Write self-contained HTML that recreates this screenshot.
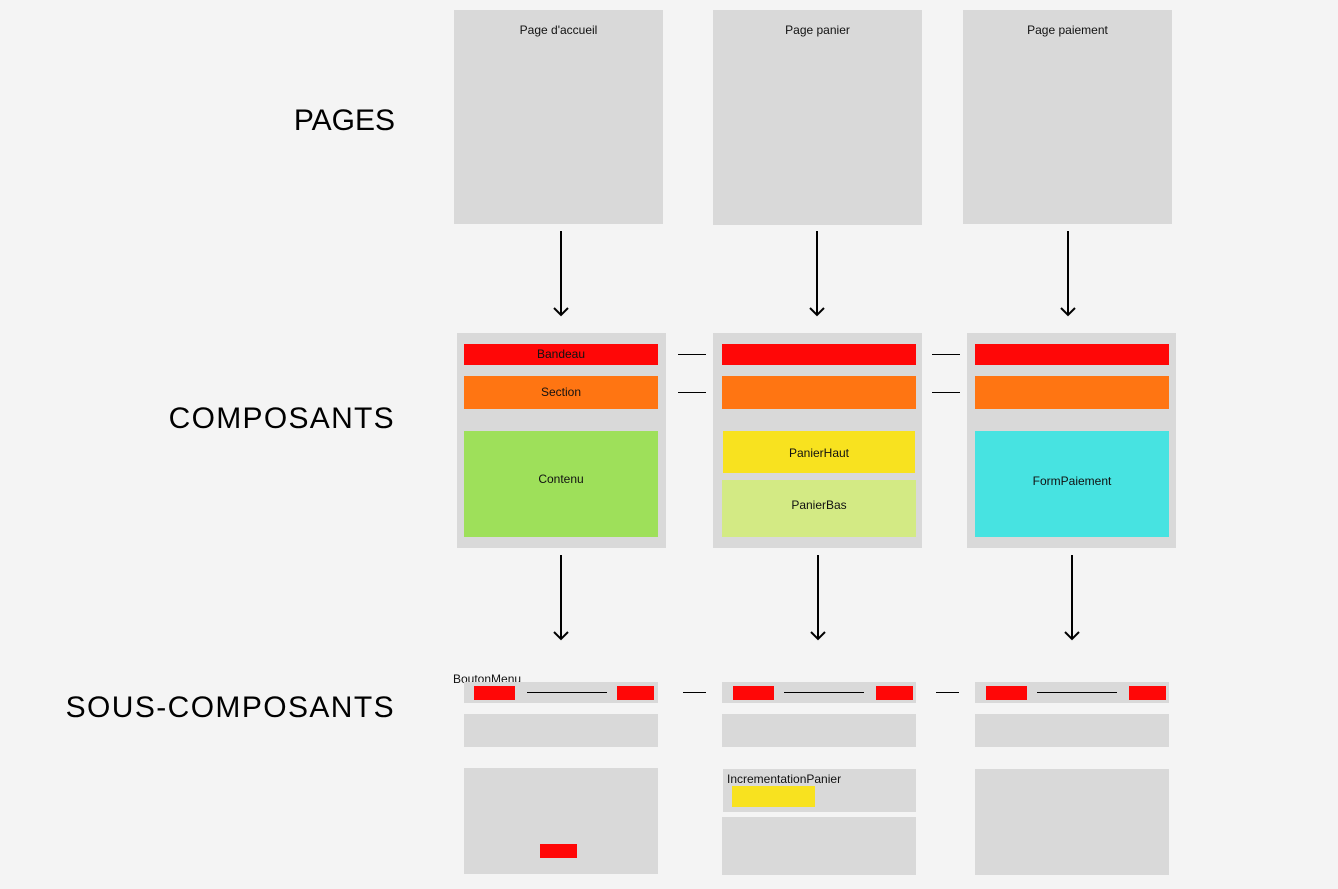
<!DOCTYPE html>
<html><head><meta charset="utf-8"><style>
body{margin:0;width:1338px;height:889px;background:#f4f4f4;position:relative;overflow:hidden;font-family:"Liberation Sans",sans-serif;}
div{position:absolute;box-sizing:border-box}
.g{background:#d9d9d9}
.r{background:#ff0707}
.o{background:#ff7512}
.t{font-size:12px;color:#111;text-align:center}
.big{font-size:30px;color:#000;right:943px;text-align:right;white-space:nowrap}
.l{height:1px;background:#000}
</style></head><body>
<div class="big" style="top:104px">PAGES</div>
<div class="big" style="top:402px;letter-spacing:1.3px">COMPOSANTS</div>
<div class="big" style="top:691px;letter-spacing:1.4px">SOUS-COMPOSANTS</div>

<div class="g t" style="left:454px;top:10px;width:209px;height:214px;padding-top:13px">Page d'accueil</div>
<div class="g t" style="left:713px;top:10px;width:209px;height:215px;padding-top:13px">Page panier</div>
<div class="g t" style="left:963px;top:10px;width:209px;height:214px;padding-top:13px">Page paiement</div>

<svg style="position:absolute;left:0;top:0" width="1338" height="889" fill="none" stroke="#000" stroke-width="2">
<path d="M561 231V315M554 308l7 7 7-7"/>
<path d="M817 231V315M810 308l7 7 7-7"/>
<path d="M1068 231V315M1061 308l7 7 7-7"/>
<path d="M561 555V639M554 632l7 7 7-7"/>
<path d="M818 555V639M811 632l7 7 7-7"/>
<path d="M1072 555V639M1065 632l7 7 7-7"/>
</svg>

<div class="g" style="left:457px;top:333px;width:209px;height:215px"></div>
<div class="g" style="left:713px;top:333px;width:209px;height:215px"></div>
<div class="g" style="left:967px;top:333px;width:209px;height:215px"></div>

<div class="r t" style="left:464px;top:344px;width:194px;height:21px;line-height:21px">Bandeau</div>
<div class="o t" style="left:464px;top:376px;width:194px;height:33px;line-height:33px">Section</div>
<div class="t" style="left:464px;top:431px;width:194px;height:106px;line-height:96px;background:#9ee05a">Contenu</div>

<div class="r" style="left:722px;top:344px;width:194px;height:21px"></div>
<div class="o" style="left:722px;top:376px;width:194px;height:33px"></div>
<div class="t" style="left:723px;top:431px;width:192px;height:42px;line-height:44px;background:#f8e21f">PanierHaut</div>
<div class="t" style="left:722px;top:480px;width:194px;height:57px;line-height:50px;background:#d3ea84">PanierBas</div>

<div class="r" style="left:975px;top:344px;width:194px;height:21px"></div>
<div class="o" style="left:975px;top:376px;width:194px;height:33px"></div>
<div class="t" style="left:975px;top:431px;width:194px;height:106px;line-height:100px;background:#47e3e1">FormPaiement</div>

<div class="l" style="left:678px;top:354px;width:28px"></div>
<div class="l" style="left:678px;top:392px;width:28px"></div>
<div class="l" style="left:932px;top:354px;width:28px"></div>
<div class="l" style="left:932px;top:392px;width:28px"></div>

<div style="left:453px;top:672px;font-size:12px;color:#111">BoutonMenu</div>
<!-- col1 -->
<div class="g" style="left:464px;top:682px;width:194px;height:21px"></div>
<div class="r" style="left:474px;top:686px;width:41px;height:14px"></div>
<div class="l" style="left:527px;top:692px;width:80px"></div>
<div class="r" style="left:617px;top:686px;width:37px;height:14px"></div>
<div class="g" style="left:464px;top:714px;width:194px;height:33px"></div>
<div class="g" style="left:464px;top:768px;width:194px;height:106px"></div>
<div class="r" style="left:540px;top:844px;width:37px;height:14px"></div>
<!-- col2 -->
<div class="g" style="left:722px;top:682px;width:194px;height:21px"></div>
<div class="r" style="left:733px;top:686px;width:41px;height:14px"></div>
<div class="l" style="left:784px;top:692px;width:80px"></div>
<div class="r" style="left:876px;top:686px;width:37px;height:14px"></div>
<div class="g" style="left:722px;top:714px;width:194px;height:33px"></div>
<div class="g" style="left:723px;top:769px;width:193px;height:43px"></div>
<div style="left:727px;top:772px;font-size:12px;color:#111">IncrementationPanier</div>
<div style="left:732px;top:786px;width:83px;height:21px;background:#f8e21f"></div>
<div class="g" style="left:722px;top:817px;width:194px;height:58px"></div>
<!-- col3 -->
<div class="g" style="left:975px;top:682px;width:194px;height:21px"></div>
<div class="r" style="left:986px;top:686px;width:41px;height:14px"></div>
<div class="l" style="left:1037px;top:692px;width:80px"></div>
<div class="r" style="left:1129px;top:686px;width:37px;height:14px"></div>
<div class="g" style="left:975px;top:714px;width:194px;height:33px"></div>
<div class="g" style="left:975px;top:769px;width:194px;height:106px"></div>

<div class="l" style="left:683px;top:692px;width:23px"></div>
<div class="l" style="left:936px;top:692px;width:23px"></div>
</body></html>
